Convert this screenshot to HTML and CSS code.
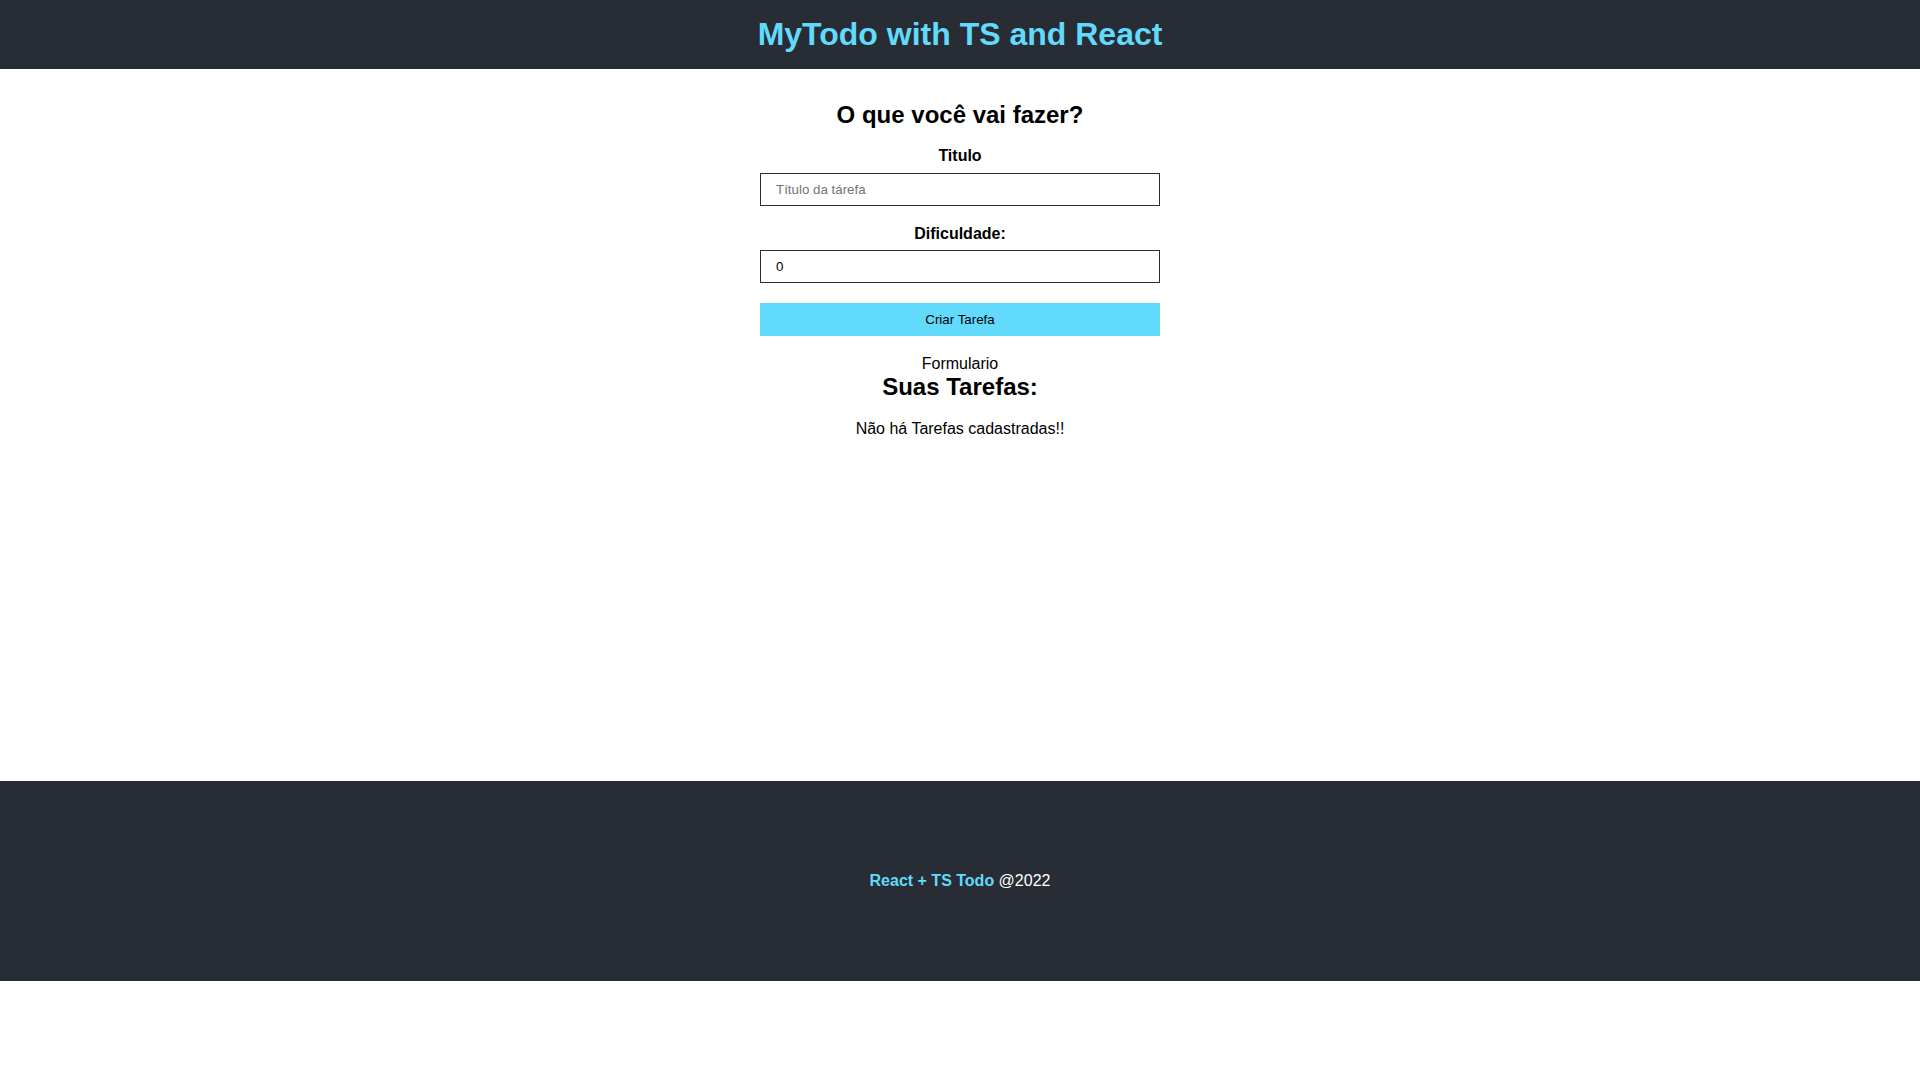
FILE: index.html
```html
<!DOCTYPE html>
<html lang="pt-BR">
<head>
<meta charset="utf-8">
<title>MyTodo with TS and React</title>
<link rel="stylesheet" href="styles.css">
</head>
<body>
<header class="header">
  <h1 class="header-title">MyTodo with TS and React</h1>
</header>
<main class="main">
  <h2 class="form-title">O que você vai fazer?</h2>
  <form class="form">
    <label class="field-label" for="title">Titulo</label>
    <input class="field-input" id="title" type="text" placeholder="Título da tárefa">
    <label class="field-label field-label-second" for="difficulty">Dificuldade:</label>
    <input class="field-input" id="difficulty" type="text" value="0">
    <button class="submit-btn" type="button">Criar Tarefa</button>
  </form>
  <p class="form-caption">Formulario</p>
  <h2 class="list-title">Suas Tarefas:</h2>
  <p class="empty">Não há Tarefas cadastradas!!</p>
</main>
<footer class="footer">
  <p class="footer-text"><span class="footer-brand">React + TS Todo</span> @2022</p>
</footer>
</body>
</html>
```
FILE: styles.css
```css
* { box-sizing: border-box; }

body {
  margin: 0;
  font-family: "Liberation Sans", Arial, sans-serif;
  color: #000;
  background: #fff;
}

.header {
  background: #282c34;
  height: 69px;
  display: flex;
  align-items: center;
  justify-content: center;
}

.header-title {
  margin: 0;
  font-size: 32px;
  font-weight: bold;
  color: #61dafb;
  line-height: 37px;
}

.main {
  min-height: 712px;
  display: flex;
  flex-direction: column;
  align-items: center;
  padding-top: 32px;
}

.form-title {
  margin: 0;
  font-size: 24px;
  line-height: 28px;
  font-weight: bold;
}

.form {
  width: 400px;
  display: flex;
  flex-direction: column;
  align-items: stretch;
  margin-top: 18px;
}

.field-label {
  display: block;
  text-align: center;
  font-size: 16px;
  font-weight: bold;
  line-height: 18px;
  margin-bottom: 8px;
}

.field-label-second {
  margin-top: 19px;
  margin-bottom: 7px;
}

.field-input {
  width: 400px;
  height: 33px;
  border: 1px solid #282c34;
  padding: 0 15px;
  font-family: "Liberation Sans", Arial, sans-serif;
  font-size: 13.33px;
  color: #000;
  background: #fff;
  outline: none;
}

.field-input::placeholder {
  color: #757575;
}

.submit-btn {
  margin-top: 20px;
  height: 33px;
  border: none;
  background: #61dafb;
  font-family: "Liberation Sans", Arial, sans-serif;
  font-size: 13.33px;
  color: #000;
  cursor: pointer;
}

.form-caption {
  margin: 19px 0 0;
  font-size: 16px;
  line-height: 18px;
}

.list-title {
  margin: 0;
  font-size: 24px;
  line-height: 28px;
  font-weight: bold;
}

.empty {
  margin: 19px 0 0;
  font-size: 16px;
  line-height: 18px;
}

.footer {
  background: #282c34;
  height: 200px;
  display: flex;
  align-items: center;
  justify-content: center;
}

.footer-text {
  margin: 0;
  color: #fff;
  font-size: 16px;
  line-height: 18px;
}

.footer-brand {
  color: #61dafb;
  font-weight: bold;
}
```
